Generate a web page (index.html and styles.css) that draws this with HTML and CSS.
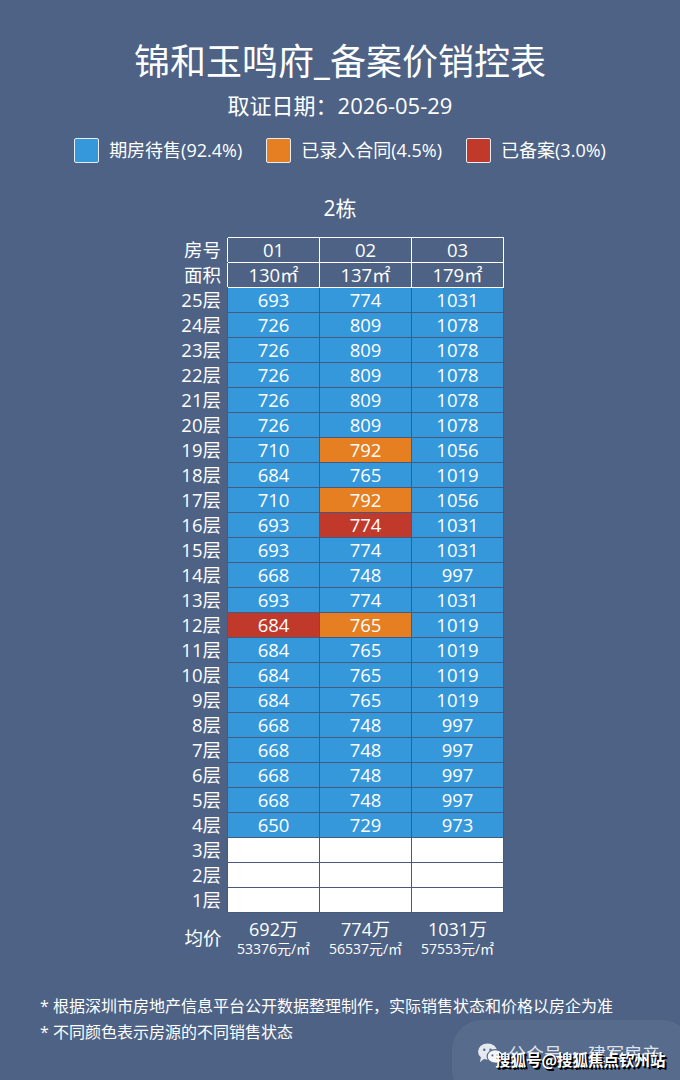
FILE: index.html
```html
<!DOCTYPE html>
<html lang="zh">
<head>
<meta charset="utf-8">
<title>锦和玉鸣府_备案价销控表</title>
<link rel="stylesheet" href="styles.css">
</head>
<body>
<div class="page">
  <h1 class="title">锦和玉鸣府_备案价销控表</h1>
  <div class="date">取证日期：2026-05-29</div>
  <div class="legend">
    <div class="legend-item"><span class="swatch blue"></span><span>期房待售(92.4%)</span></div>
    <div class="legend-item"><span class="swatch orange"></span><span>已录入合同(4.5%)</span></div>
    <div class="legend-item"><span class="swatch red"></span><span>已备案(3.0%)</span></div>
  </div>
  <div class="building">2栋</div>
  <table class="grid">
    <tbody>
      <tr class="head"><th class="lbl">房号</th><td>01</td><td>02</td><td>03</td></tr>
      <tr class="head"><th class="lbl">面积</th><td>130㎡</td><td>137㎡</td><td>179㎡</td></tr>
      <tr><th class="lbl">25层</th><td class="b">693</td><td class="b">774</td><td class="b">1031</td></tr>
      <tr><th class="lbl">24层</th><td class="b">726</td><td class="b">809</td><td class="b">1078</td></tr>
      <tr><th class="lbl">23层</th><td class="b">726</td><td class="b">809</td><td class="b">1078</td></tr>
      <tr><th class="lbl">22层</th><td class="b">726</td><td class="b">809</td><td class="b">1078</td></tr>
      <tr><th class="lbl">21层</th><td class="b">726</td><td class="b">809</td><td class="b">1078</td></tr>
      <tr><th class="lbl">20层</th><td class="b">726</td><td class="b">809</td><td class="b">1078</td></tr>
      <tr><th class="lbl">19层</th><td class="b">710</td><td class="o">792</td><td class="b">1056</td></tr>
      <tr><th class="lbl">18层</th><td class="b">684</td><td class="b">765</td><td class="b">1019</td></tr>
      <tr><th class="lbl">17层</th><td class="b">710</td><td class="o">792</td><td class="b">1056</td></tr>
      <tr><th class="lbl">16层</th><td class="b">693</td><td class="r">774</td><td class="b">1031</td></tr>
      <tr><th class="lbl">15层</th><td class="b">693</td><td class="b">774</td><td class="b">1031</td></tr>
      <tr><th class="lbl">14层</th><td class="b">668</td><td class="b">748</td><td class="b">997</td></tr>
      <tr><th class="lbl">13层</th><td class="b">693</td><td class="b">774</td><td class="b">1031</td></tr>
      <tr><th class="lbl">12层</th><td class="r">684</td><td class="o">765</td><td class="b">1019</td></tr>
      <tr><th class="lbl">11层</th><td class="b">684</td><td class="b">765</td><td class="b">1019</td></tr>
      <tr><th class="lbl">10层</th><td class="b">684</td><td class="b">765</td><td class="b">1019</td></tr>
      <tr><th class="lbl">9层</th><td class="b">684</td><td class="b">765</td><td class="b">1019</td></tr>
      <tr><th class="lbl">8层</th><td class="b">668</td><td class="b">748</td><td class="b">997</td></tr>
      <tr><th class="lbl">7层</th><td class="b">668</td><td class="b">748</td><td class="b">997</td></tr>
      <tr><th class="lbl">6层</th><td class="b">668</td><td class="b">748</td><td class="b">997</td></tr>
      <tr><th class="lbl">5层</th><td class="b">668</td><td class="b">748</td><td class="b">997</td></tr>
      <tr><th class="lbl">4层</th><td class="b">650</td><td class="b">729</td><td class="b">973</td></tr>
      <tr><th class="lbl">3层</th><td class="w"></td><td class="w"></td><td class="w"></td></tr>
      <tr><th class="lbl">2层</th><td class="w"></td><td class="w"></td><td class="w"></td></tr>
      <tr><th class="lbl">1层</th><td class="w"></td><td class="w"></td><td class="w"></td></tr>
      <tr class="avg">
        <th class="lbl">均价</th>
        <td><div class="total">692万</div><div class="unit">53376元/㎡</div></td>
        <td><div class="total">774万</div><div class="unit">56537元/㎡</div></td>
        <td><div class="total">1031万</div><div class="unit">57553元/㎡</div></td>
      </tr>
    </tbody>
  </table>
  <div class="notes">
    <p>* 根据深圳市房地产信息平台公开数据整理制作，实际销售状态和价格以房企为准</p>
    <p>* 不同颜色表示房源的不同销售状态</p>
  </div>
  <div class="wm">
    <svg class="wm-icon" viewBox="0 0 28 24" width="27" height="23">
      <ellipse cx="11" cy="10" rx="10" ry="8.5" fill="#e6e9ef"/>
      <path d="M4 16 L3 21 L8 17 Z" fill="#e6e9ef"/>
      <ellipse cx="19" cy="15" rx="8.5" ry="7" fill="#f4f6f9" stroke="#56698a" stroke-width="1.2"/>
      <circle cx="7.5" cy="8" r="1.3" fill="#56698a"/>
      <circle cx="14" cy="8" r="1.3" fill="#56698a"/>
      <circle cx="16" cy="14" r="1.1" fill="#56698a"/>
      <circle cx="21.5" cy="14" r="1.1" fill="#56698a"/>
    </svg>
    <span class="wm-text">公众号 · 建军房产</span>
  </div>
  <div class="sohu">搜狐号@搜狐焦点钦州站</div>
</div>
</body>
</html>
```

FILE: styles.css
```css
html, body {
  margin: 0;
  padding: 0;
}
body {
  background: #4d6285;
  color: #ffffff;
  font-family: "Open Sans", "Noto Sans CJK SC", sans-serif;
}
.page {
  position: relative;
  width: 680px;
  height: 1080px;
  overflow: hidden;
}
.title {
  margin: 40px 0 0;
  font-size: 36px;
  line-height: 44px;
  font-weight: 400;
  text-align: center;
}
.date {
  margin-top: 7px;
  font-size: 22px;
  line-height: 28px;
  text-align: center;
}
.legend {
  margin-top: 18px;
  display: flex;
  justify-content: center;
  gap: 24px;
  font-size: 18px;
  line-height: 26px;
}
.legend-item {
  display: flex;
  align-items: center;
  gap: 10px;
}
.swatch {
  width: 23px;
  height: 23px;
  border: 1px solid #e8edf4;
  border-radius: 2px;
}
.swatch.blue { background: #3498db; }
.swatch.orange { background: #e67e22; }
.swatch.red { background: #c0392b; }
.building {
  margin-top: 31px;
  font-size: 21px;
  line-height: 28px;
  text-align: center;
}
.grid {
  margin: 15px 0 0 167px;
  border-collapse: collapse;
  table-layout: fixed;
  font-size: 18.5px;
}
.grid th, .grid td {
  padding: 0;
  height: 24px;
  line-height: 22px;
  text-align: center;
  font-weight: 400;
}
.grid td {
  width: 91px;
  border: 1px solid #47597c;
}
.grid th.lbl {
  width: 53px;
  text-align: right;
  padding-right: 6px;
  border: 1px solid transparent;
  border-right: none;
}
.grid tr.head td {
  border: 1px solid #ffffff;
}
.grid td.b { background: #3498db; }
.grid td.o { background: #e67e22; }
.grid td.r { background: #c0392b; }
.grid td.w { background: #ffffff; }
.grid tr.avg th, .grid tr.avg td {
  border: none;
  height: auto;
  padding-top: 6px;
}
.total {
  font-size: 18px;
  line-height: 21px;
}
.unit {
  font-size: 14px;
  line-height: 17px;
}
.notes {
  margin: 36px 0 0 40px;
  font-size: 16px;
  line-height: 26px;
}
.notes p {
  margin: 0;
}
.wm {
  position: absolute;
  left: 452px;
  top: 1020px;
  width: 240px;
  height: 80px;
  border-radius: 30px;
  background: rgba(255, 255, 255, 0.06);
  display: flex;
  align-items: flex-start;
  padding: 22px 0 0 25px;
  box-sizing: border-box;
  gap: 4px;
}
.wm-text {
  font-size: 18px;
  line-height: 22px;
  color: #dfe4ec;
  font-family: "Noto Sans CJK SC", sans-serif;
}
.sohu {
  position: absolute;
  left: 495px;
  top: 1048px;
  font-size: 15.5px;
  line-height: 22px;
  font-weight: 700;
  color: #ffffff;
  font-family: "Noto Sans CJK SC", sans-serif;
  text-shadow: 1px 1px 0 #000, 2px 2px 0 #000;
}
```
